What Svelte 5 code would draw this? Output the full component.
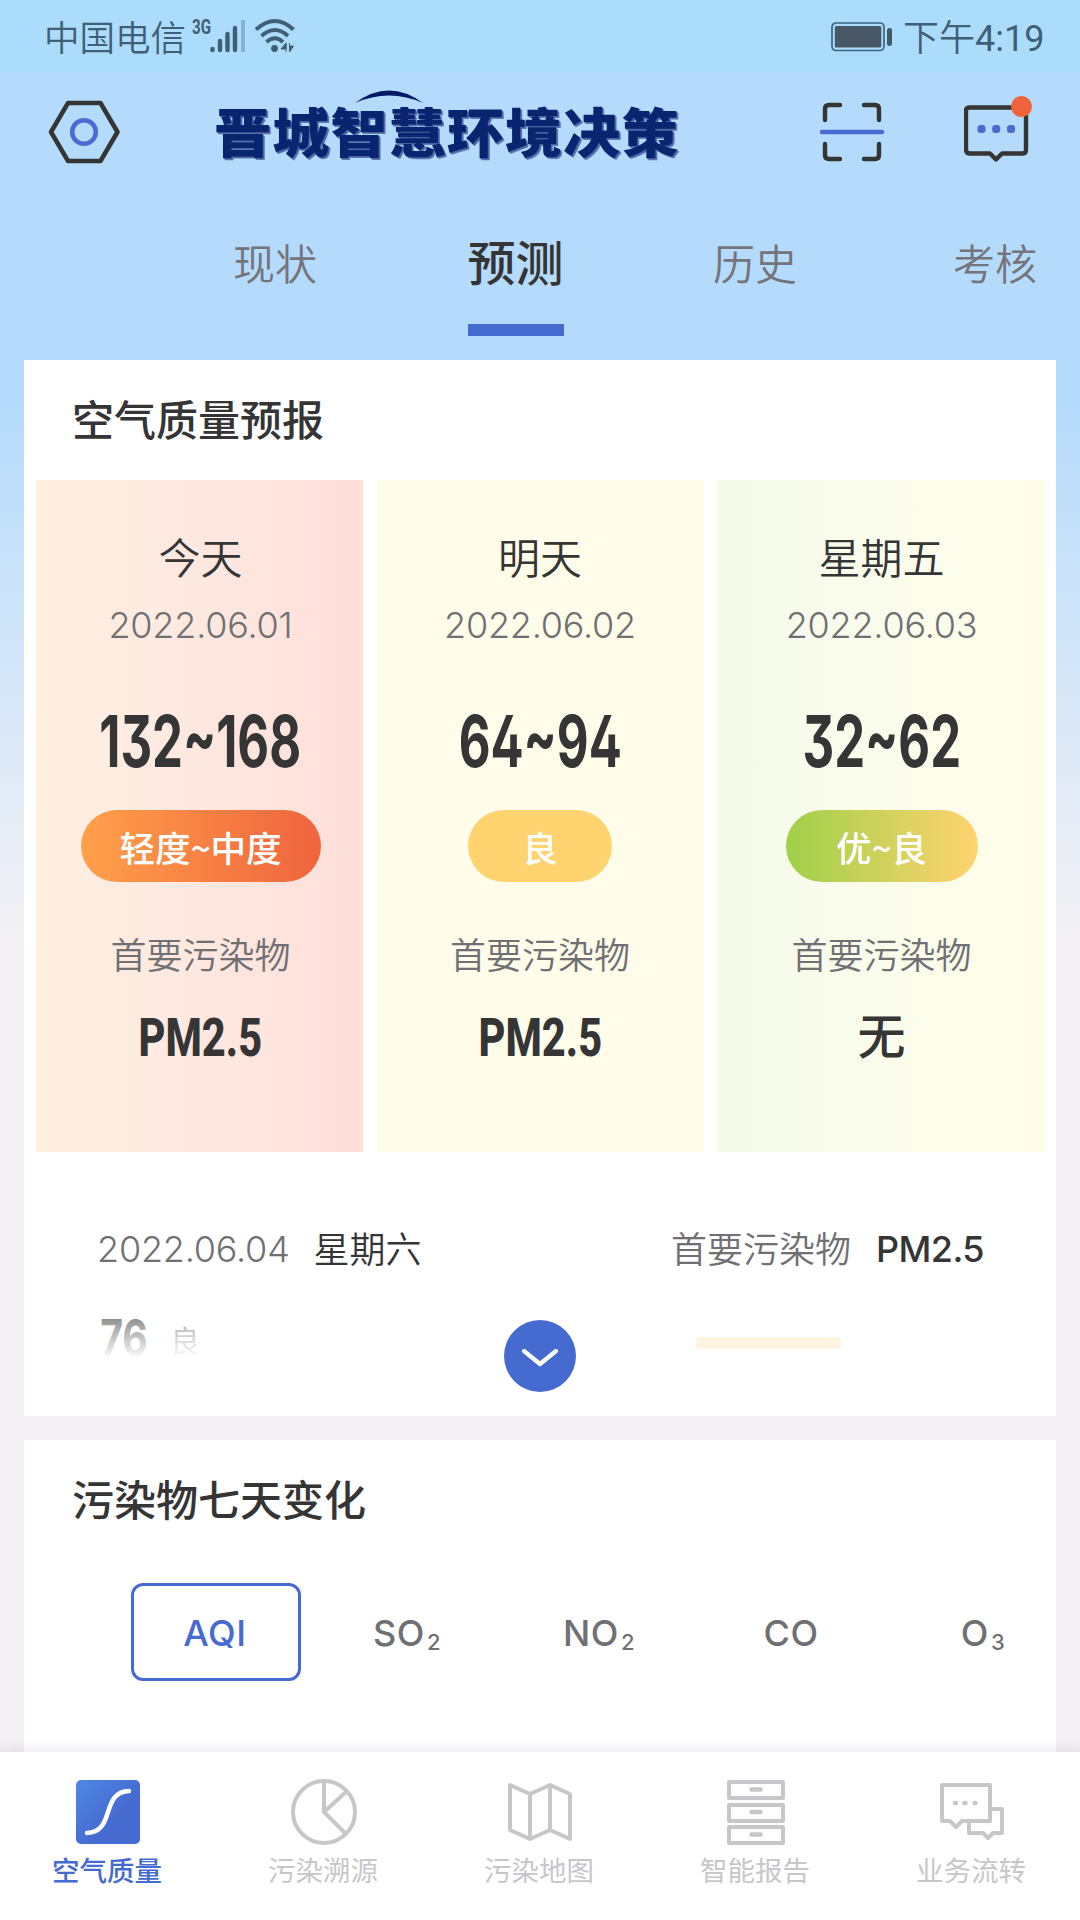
<script>
    let tabs = ["现状", "预测", "历史", "考核"];
    let activeTab = "预测";

    let days = [
        { name: "今天", date: "2022.06.01", range: "132~168", level: "轻度~中度", pollutant: "PM2.5", tone: "orange" },
        { name: "明天", date: "2022.06.02", range: "64~94", level: "良", pollutant: "PM2.5", tone: "yellow" },
        { name: "星期五", date: "2022.06.03", range: "32~62", level: "优~良", pollutant: "无", tone: "green" },
    ];

    let pollutants = [
        { name: "AQI" },
        { name: "SO", sub: "2" },
        { name: "NO", sub: "2" },
        { name: "CO" },
        { name: "O", sub: "3" },
    ];
    let activePollutant = "AQI";

    let navs = [
        { id: "air", label: "空气质量" },
        { id: "source", label: "污染溯源" },
        { id: "map", label: "污染地图" },
        { id: "report", label: "智能报告" },
        { id: "flow", label: "业务流转" },
    ];
    let activeNav = "air";
</script>

<div class="page">
    <div class="status">
        <span class="carrier">中国电信</span>
        <span class="net">3G</span>
        <svg class="signal" width="36" height="34" viewBox="0 0 36 34">
            <g stroke="#3f5f76" stroke-width="4.400" stroke-linecap="round">
                <path d="M2.500 30v1M10 22v9M17.500 15v16M25 9v22" />
            </g>
            <path d="M33 1v32" stroke="#86b3d3" stroke-width="4" />
        </svg>
        <svg class="wifi" width="40" height="34" viewBox="0 0 40 34">
            <g fill="none" stroke="#3f5f76" stroke-width="3.800">
                <path d="M1 10.500Q20 -6.500 38.500 10.500" />
                <path d="M6.500 17Q20 5 33 17" />
                <path d="M11.500 23Q20 15.500 28 23" />
            </g>
            <circle cx="19.500" cy="29.500" r="3.400" fill="#3f5f76" />
            <path d="M31 24v9M31 24l-5 6h5zM34.500 24v9M34.500 33l4-6h-4z" fill="#3f5f76" stroke="#3f5f76" stroke-width="1" />
        </svg>
        <svg class="battery" width="62" height="30" viewBox="0 0 62 30">
            <rect x="1" y="1" width="52" height="27.500" rx="4" fill="none" stroke="#3f6480" stroke-width="1.700" />
            <rect x="3.800" y="4" width="46.500" height="21.500" rx="1.500" fill="#485866" />
            <rect x="56" y="6" width="5" height="18" rx="2.500" fill="#43596a" />
        </svg>
        <span class="time">下午<b>4:19</b></span>
    </div>

    <div class="header">
        <svg class="hex" width="72" height="64" viewBox="0 0 72 64">
            <path d="M20 3H52.500L69.500 32L52.500 61H20L3 32Z" fill="none" stroke="#353535" stroke-width="4.500" stroke-linejoin="round" />
            <circle cx="36" cy="32" r="11.800" fill="none" stroke="#4a6bcf" stroke-width="4.500" />
        </svg>
        <div class="brand">
            <svg class="arc" width="68" height="13" viewBox="0 0 68 13">
                <path d="M0 13Q34 -12 68 13Q34 -2 0 13Z" fill="#031b66" />
            </svg>
            <h1>晋城智慧环境决策</h1>
        </div>
        <svg class="scan" width="66" height="60" viewBox="0 0 66 60">
            <g fill="none" stroke="#353535" stroke-width="4.400" stroke-linecap="round" stroke-linejoin="round">
                <path d="M5 18V7Q5 3 9 3H20M44 3H55Q59 3 59 7V18M59 42V53Q59 57 55 57H44M20 57H9Q5 57 5 53V42" />
            </g>
            <path d="M2 30H62" stroke="#4a6bcf" stroke-width="4.400" stroke-linecap="round" />
        </svg>
        <svg class="message" width="70" height="68" viewBox="0 0 70 68">
            <path d="M6 12.500H59Q62 12.500 62 15.500V54.500Q62 58.500 59 58.500H38L32 64.500L26 58.500H6Q2 58.500 2 54.500V15.500Q2 12.500 6 12.500Z" fill="none" stroke="#353535" stroke-width="4.400" stroke-linejoin="round" />
            <g fill="#4a6bcf">
                <rect x="13.500" y="30" width="8" height="8" rx="3" />
                <rect x="28.200" y="30" width="8" height="8" rx="3" />
                <rect x="43" y="30" width="8" height="8" rx="3" />
            </g>
            <circle cx="57.500" cy="11.500" r="10.500" fill="#f0643c" />
        </svg>
    </div>

    <div class="tabs">
        {#each tabs as tab}
            <div class="tab" class:active={tab === activeTab}>{tab}</div>
        {/each}
    </div>

    <div class="card forecast">
        <h2>空气质量预报</h2>
        <div class="days">
            {#each days as day}
                <div class="day {day.tone}">
                    <div class="name">{day.name}</div>
                    <div class="date">{day.date}</div>
                    <div class="range"><span class="narrow">{day.range}</span></div>
                    <div class="level">{day.level}</div>
                    <div class="label">首要污染物</div>
                    {#if day.pollutant === "无"}
                        <div class="value none">{day.pollutant}</div>
                    {:else}
                        <div class="value"><span class="narrow">{day.pollutant}</span></div>
                    {/if}
                </div>
            {/each}
        </div>
        <div class="row">
            <span class="date-light">2022.06.04</span>
            <span class="week">星期六</span>
            <span class="primary">首要污染物</span>
            <span class="pm">PM2.5</span>
        </div>
        <div class="row next">
            <span class="aqi"><span class="narrow">76</span></span>
            <span class="good">良</span>
            <div class="bar"></div>
            <div class="fade"></div>
            <div class="more">
                <svg width="38" height="22" viewBox="0 0 38 22">
                    <path d="M3 4L19 17L35 4" fill="none" stroke="#fff" stroke-width="4.200" stroke-linecap="round" stroke-linejoin="round" />
                </svg>
            </div>
        </div>
    </div>

    <div class="card change">
        <h2>污染物七天变化</h2>
        <div class="pollutants">
            {#each pollutants as item}
                <div class="pollutant" class:active={item.name === activePollutant}>
                    {item.name}{#if item.sub}<sub>{item.sub}</sub>{/if}
                </div>
            {/each}
        </div>
    </div>

    <div class="nav">
        {#each navs as nav}
            <div class="nav-item" class:active={nav.id === activeNav}>
                <svg width="68" height="70" viewBox="0 0 68 70" fill="none" stroke="#c8c6cb" stroke-width="4" stroke-linejoin="round">
                    {#if nav.id === "air"}
                        <defs>
                            <linearGradient id="blue" x1="0" y1="0" x2=".6" y2=".6">
                                <stop offset="0" stop-color="#4f88e6" />
                                <stop offset="1" stop-color="#466bd0" />
                            </linearGradient>
                        </defs>
                        <rect x="2" y="3" width="64" height="64" rx="5" fill="url(#blue)" stroke="none" />
                        <path d="M13 56C42 55 26 15 55 14" stroke="#fff" stroke-width="4.500" stroke-linecap="round" />
                    {:else if nav.id === "source"}
                        <circle cx="34" cy="35" r="31" />
                        <path d="M34 4V35L57 14M34 35L56 57" />
                    {:else if nav.id === "map"}
                        <path d="M4 8L24 17L44 8L64 17V62L44 53L24 62L4 53ZM24 17V62M44 8V53" />
                    {:else if nav.id === "report"}
                        <rect x="7" y="5" width="54" height="16" />
                        <rect x="7" y="28" width="54" height="16" />
                        <rect x="7" y="50" width="54" height="16" />
                        <path d="M29.500 12.500H38.500M29.500 35H38.500M29.500 57.500H38.500" stroke-width="4.500" stroke-linecap="round" />
                    {:else}
                        <path d="M4 8H52V44H24L18 50L12 44H4Z" />
                        <path d="M52 32H64V56H55L50 61L45 56H31V44" />
                        <path d="M17 26H18M26.500 26H27.500M36.500 26H37.500" stroke-linecap="round" stroke-width="4.500" />
                    {/if}
                </svg>
                <span>{nav.label}</span>
            </div>
        {/each}
    </div>
</div>

<style>
    :global(body) {
        background: #f3f1f5;
    }
    .page {
        width: 1080px;
        height: 1920px;
        overflow: hidden;
        display: flex;
        flex-direction: column;
        font-family: Roboto, "Noto Sans CJK SC", sans-serif;
        color: #353535;
        background: linear-gradient(#b5dbfc 0, #b5dbfc 400px, #f3f1f5 940px);
    }
    .status {
        height: 72px;
        flex: none;
        display: flex;
        align-items: flex-start;
        background: #abdcfb;
        color: #3f5f76;
        font-weight: 350;
    }
    .carrier {
        margin: 14px 0 0 44px;
        font-size: 35.5px;
        line-height: 50px;
        width: 148px;
    }
    .net {
        margin-top: 17px;
        font-size: 21px;
        line-height: 20px;
        font-weight: 700;
        width: 18px;
        transform: scaleX(0.72);
        transform-origin: left;
    }
    .signal {
        margin-top: 19px;
    }
    .wifi {
        margin: 19px 0 0 9px;
    }
    .battery {
        margin: 22px 0 0 536px;
    }
    .time {
        margin: 14px 0 0 10px;
        font-size: 36px;
        line-height: 50px;
        white-space: nowrap;
    }
    .time b {
        font-weight: 400;
    }
    .header {
        height: 130px;
        flex: none;
        display: flex;
        align-items: flex-start;
    }
    .hex {
        margin: 28px 0 0 48px;
    }
    .brand {
        position: relative;
        margin: 33px 0 0 94px;
        width: 464px;
    }
    .arc {
        position: absolute;
        left: 141px;
        top: -15px;
    }
    h1 {
        margin: 0;
        padding-top: 2px;
        font-size: 57px;
        line-height: 56px;
        font-weight: 900;
        letter-spacing: 1.2px;
        white-space: nowrap;
        color: #0a2570;
        transform: scaleY(0.94);
        text-shadow: 1px 1px 0 #4a619f, 2px 2px 0 #5f78b3;
    }
    .scan {
        margin: 30px 0 0 142px;
    }
    .message {
        margin: 23px 0 0 78px;
    }
    .tabs {
        height: 158px;
        flex: none;
        display: flex;
        padding-left: 156px;
    }
    .tab {
        box-sizing: border-box;
        width: 240px;
        height: 134px;
        padding-right: 2px;
        flex: none;
        display: flex;
        flex-direction: column;
        align-items: center;
        font-size: 42px;
        line-height: 128px;
        font-weight: 350;
        color: #74747a;
    }
    .tab.active {
        padding-right: 0;
        font-size: 48px;
        font-weight: 500;
        line-height: 125px;
        text-indent: -1px;
        color: #353535;
    }
    .tab.active::after {
        content: "";
        width: 96px;
        height: 12px;
        margin-top: -3px;
        background: #466bd0;
    }
    .card {
        margin: 0 24px;
        background: #fff;
        flex: none;
    }
    h2 {
        margin: 0;
        height: 120px;
        padding-left: 48px;
        font-size: 42px;
        line-height: 124px;
        font-weight: 500;
    }
    .forecast {
        height: 1056px;
    }
    .days {
        display: flex;
        justify-content: space-between;
        padding: 0 12px;
    }
    .day {
        box-sizing: border-box;
        width: 327px;
        height: 672px;
        display: flex;
        flex-direction: column;
        align-items: center;
    }
    .day.orange {
        padding-left: 2px;
        background: linear-gradient(90deg, #fff0e1, #fde8e0 50%, #fedfd9);
    }
    .day.yellow {
        background: #fffcea;
    }
    .day.green {
        padding-left: 2px;
        background: linear-gradient(90deg, #f5faeb, #fafceb 50%, #fffde9);
    }
    .name {
        margin-top: 50px;
        font-size: 42px;
        line-height: 60px;
        font-weight: 350;
    }
    .date {
        margin-top: 10px;
        font-size: 36px;
        line-height: 50px;
    }
    .date,
    .date-light {
        font-family: Inter, sans-serif;
        font-weight: 300;
        letter-spacing: -0.2px;
        color: #707074;
    }
    .narrow {
        display: inline-block;
        transform: scaleX(0.77);
        white-space: nowrap;
    }
    .range {
        margin-top: 49px;
        font-size: 71px;
        line-height: 84px;
    }
    .range,
    .aqi {
        font-family: Inter, sans-serif;
        font-feature-settings: "cv02", "cv09";
        font-weight: 750;
    }
    .range .narrow {
        transform: scaleX(0.69);
    }
    .level {
        margin-top: 27px;
        height: 72px;
        line-height: 73px;
        border-radius: 36px;
        font-family: "Noto Sans CJK SC", sans-serif;
        font-size: 35.5px;
        font-weight: 500;
        color: #fff;
        text-align: center;
    }
    .orange .level {
        width: 240px;
        background: linear-gradient(90deg, #ffa04a, #ef643e);
    }
    .yellow .level {
        width: 144px;
        background: #ffd370;
    }
    .green .level {
        width: 192px;
        background: linear-gradient(90deg, #a0d049, #ffd370);
    }
    .label {
        margin-top: 50px;
        font-size: 36px;
        line-height: 50px;
        font-weight: 350;
        color: #707074;
    }
    .value {
        margin-top: 24px;
        font-size: 54px;
        line-height: 64px;
        font-weight: 800;
    }
    .value.none {
        font-size: 48px;
        font-weight: 500;
    }
    .row {
        display: flex;
        padding: 0 72px 0 73px;
        margin-top: 72px;
        font-size: 36px;
        line-height: 50px;
    }
    .primary {
        margin: 2px 0 0 auto;
        font-weight: 350;
        color: #707074;
    }
    .week {
        margin: 2px 0 0 24px;
        font-weight: 350;
    }
    .pm {
        margin-left: 25px;
        font-family: Inter, sans-serif;
        font-weight: 500;
        letter-spacing: -0.6px;
    }
    .next {
        position: relative;
        height: 83px;
        margin-top: 33px;
    }
    .aqi {
        font-size: 51px;
        line-height: 58px;
        width: 77px;
        margin-left: -4px;
    }
    .good {
        font-size: 30px;
        line-height: 60px;
        margin-top: 3px;
        color: #707074;
    }
    .bar {
        position: relative;
        z-index: 1;
        margin: 28px 143px 0 auto;
        width: 145px;
        height: 12px;
        border-radius: 4px;
        background: #fff4df;
    }
    .fade {
        position: absolute;
        left: 0;
        right: 0;
        top: -20px;
        height: 100px;
        background: linear-gradient(rgba(255, 255, 255, 0.05), #fff 70%);
    }
    .more {
        box-sizing: border-box;
        position: absolute;
        left: 480px;
        top: 11px;
        width: 72px;
        height: 72px;
        padding-top: 4px;
        border-radius: 50%;
        background: #466bd0;
        display: flex;
        align-items: center;
        justify-content: center;
    }
    .change {
        margin-top: 24px;
        height: 312px;
    }
    .pollutants {
        display: flex;
        overflow: hidden;
        padding: 23px 0 0 107px;
    }
    .pollutant {
        box-sizing: border-box;
        flex: none;
        width: 170px;
        height: 98px;
        margin-right: 22px;
        border: 3px solid transparent;
        border-radius: 12px;
        text-align: center;
        text-indent: -2px;
        font-family: Inter, sans-serif;
        font-size: 36px;
        line-height: 95px;
        letter-spacing: 0.6px;
        font-weight: 450;
        color: #707074;
    }
    .pollutant.active {
        color: #466bd0;
        border-color: #466bd0;
    }
    sub {
        font-size: 22px;
        line-height: 0;
        vertical-align: -4px;
        margin-left: 2px;
        font-weight: 500;
    }
    .nav {
        position: relative;
        height: 168px;
        flex: none;
        display: flex;
        background: #fff;
        box-shadow: 0 0 14px rgba(60, 40, 80, 0.14);
    }
    .nav-item {
        width: 216px;
        display: flex;
        flex-direction: column;
        align-items: center;
        padding-top: 25px;
        font-size: 27.5px;
        line-height: 40px;
        color: #c8c6cb;
    }
    .nav-item span {
        margin: 5px 2px 0 0;
    }
    .nav-item.active {
        color: #466bd0;
        font-weight: 500;
    }
</style>
